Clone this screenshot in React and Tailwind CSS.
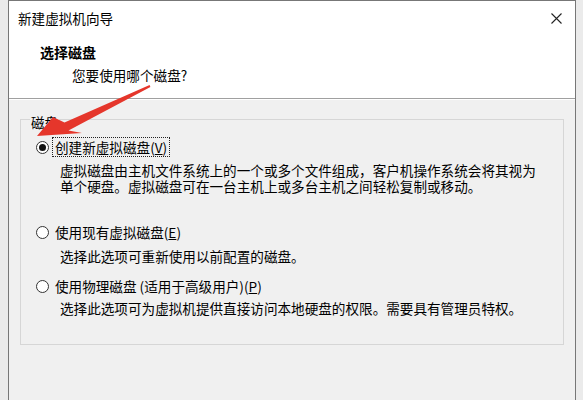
function Radio({ checked }) {
  return (
    <span className="flex h-[13px] w-[13px] shrink-0 items-center justify-center rounded-full border border-[#333] bg-white">
      {checked && <span className="h-[7px] w-[7px] rounded-full bg-[#111]" />}
    </span>
  );
}

function Option({ checked, label, hotkey, focused, className, children }) {
  return (
    <div className={className}>
      <div className="flex h-[20px] items-center pl-[15px]">
        <Radio checked={checked} />
        <span
          className={
            'ml-[4px] px-[2px] leading-[18px] ' +
            (focused ? 'outline outline-1 outline-dotted outline-[#222]' : '')
          }
        >
          {label}(<span className="underline">{hotkey}</span>)
        </span>
      </div>
      {children}
    </div>
  );
}

export default function App() {
  return (
    <div className="relative h-[400px] w-[583px] overflow-hidden bg-[#ebebeb] text-[13.6px] text-black font-['Noto_Sans_CJK_SC','Noto_Sans',sans-serif]">
      <div className="ml-[8px] flex h-full w-[568px] flex-col border-x border-t border-[#777] bg-[#f0f0f0]">
        {/* header */}
        <div className="h-[98px] shrink-0 border-b border-[#a0a0a0] bg-white">
          <div className="mt-[7px] flex h-[20px] items-center justify-between pl-[9px] pr-[13px]">
            <span className="leading-[20px]">新建虚拟机向导</span>
            <svg width="11" height="11" viewBox="0 0 11 11">
              <path d="M0.5 0.5L10.5 10.5M10.5 0.5L0.5 10.5" stroke="#222" strokeWidth="1.1" />
            </svg>
          </div>
          <div className="mt-[14px] pl-[31px] text-[14px] font-bold leading-[20px]">选择磁盘</div>
          <div className="mt-[3px] pl-[63px] leading-[20px]">您要使用哪个磁盘?</div>
        </div>

        {/* body */}
        <div className="flex-1 border-t border-white">
          <fieldset className="mx-[11px] mt-[6px] border border-[#d6d6d6] pb-[28px]">
            <legend className="ml-[9px] px-[1px] pt-[6px] leading-[20px]">磁盘</legend>

            <Option className="mt-[5px]" checked focused label="创建新虚拟磁盘" hotkey="V">
              <div className="mt-[5px] pl-[39px] leading-[16px]">
                <p>虚拟磁盘由主机文件系统上的一个或多个文件组成，客户机操作系统会将其视为</p>
                <p>单个硬盘。虚拟磁盘可在一台主机上或多台主机之间轻松复制或移动。</p>
              </div>
            </Option>

            <Option className="mt-[28px]" label="使用现有虚拟磁盘" hotkey="E">
              <p className="mt-[7px] pl-[39px] leading-[15px]">选择此选项可重新使用以前配置的磁盘。</p>
            </Option>

            <Option className="mt-[12px]" label="使用物理磁盘 (适用于高级用户)" hotkey="P">
              <p className="mt-[5px] pl-[39px] leading-[15px]">
                选择此选项可为虚拟机提供直接访问本地硬盘的权限。需要具有管理员特权。
              </p>
            </Option>
          </fieldset>
        </div>
      </div>

      {/* red annotation arrow */}
      <svg className="pointer-events-none absolute left-0 top-0" width="583" height="400">
        <polygon
          points="37,136 53,117 64.5,122.5 149.6,85 150.4,87 68.5,130.5 82,133"
          fill="#e5362b"
        />
      </svg>
    </div>
  );
}
